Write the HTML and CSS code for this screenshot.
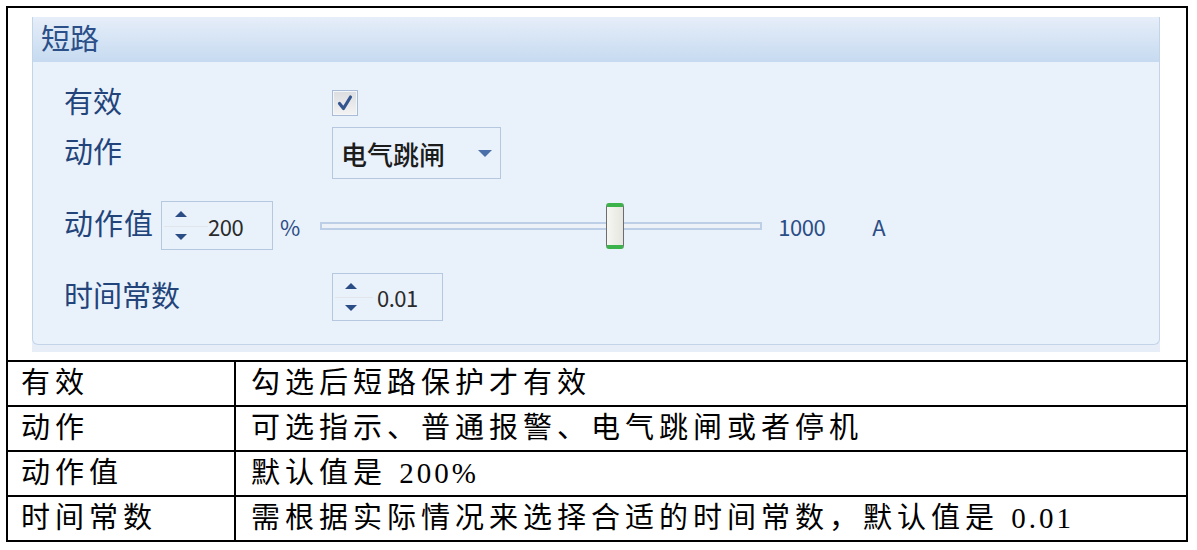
FILE: index.html
```html
<!DOCTYPE html>
<html>
<head>
<meta charset="utf-8">
<title>短路</title>
<link rel="stylesheet" href="styles.css">
</head>
<body>
<table class="spec">
  <colgroup><col class="c1"><col class="c2"></colgroup>
  <tr>
    <td colspan="2" class="shot-cell">
      <div class="shot">
        <div class="group">
          <div class="group-head">短路</div>
          <div class="group-body">
            <div class="row r1">
              <span class="lbl">有效</span>
              <span class="check">
                <svg width="18" height="18" viewBox="0 0 18 18"><path d="M3.5 9.5 L7.5 14.5 L14.5 3" fill="none" stroke="#33568f" stroke-width="3.2" stroke-linecap="round" stroke-linejoin="round"/></svg>
              </span>
            </div>
            <div class="row r2">
              <span class="lbl">动作</span>
              <span class="combo">电气跳闸<i class="caret"></i></span>
            </div>
            <div class="row r3">
              <span class="lbl lbl-auto">动作值</span>
              <span class="spin spin-a"><span class="spin-btns"><i class="up"></i><i class="down"></i></span><span class="num">200</span></span>
              <span class="unit">%</span>
              <span class="track"><span class="thumb"></span></span>
              <span class="max">1000</span>
              <span class="amp">A</span>
            </div>
            <div class="row r4">
              <span class="lbl">时间常数</span>
              <span class="spin spin-b"><span class="spin-btns"><i class="up"></i><i class="down"></i></span><span class="num">0.01</span></span>
            </div>
          </div>
        </div>
      </div>
    </td>
  </tr>
  <tr><td class="k">有效</td><td class="v">勾选后短路保护才有效</td></tr>
  <tr><td class="k">动作</td><td class="v">可选指示、普通报警、电气跳闸或者停机</td></tr>
  <tr><td class="k">动作值</td><td class="v">默认值是 <span class="lat">200%</span></td></tr>
  <tr><td class="k">时间常数</td><td class="v">需根据实际情况来选择合适的时间常数，默认值是 <span class="lat">0.01</span></td></tr>
</table>
</body>
</html>
```

FILE: styles.css
```css
body{margin:0; padding:6px; background:#fff;}

.spec{border-collapse:collapse; width:1182px; table-layout:fixed; font-family:"Liberation Serif","Noto Sans CJK SC",serif; font-size:29px; color:#000;}
.spec td{border:2px solid #000; padding:0;}
.c1{width:228px;}
.spec .k{height:43px; line-height:43px; padding-left:13px; letter-spacing:5px; white-space:nowrap;}
.spec .v{height:43px; line-height:43px; padding-left:15px; letter-spacing:5px; white-space:nowrap;}
.lat{letter-spacing:3px;}

/* screenshot panel */
.shot{margin:9px 26px 8px 24px; height:335px; background:#e7eef8; font-family:"Noto Sans CJK SC",sans-serif;}
.group{height:328px; box-sizing:border-box; border:1px solid #c3d4e9; border-top:none; border-radius:0 0 6px 6px; background:#e9f1fb;}
.group-head{height:45px; line-height:40px; padding-left:8px; font-size:29px; color:#2b4f88; background:linear-gradient(#e6eef9,#c6daf0);}
.group-body{padding:27px 0 0 31px;}

.row{display:flex; align-items:center;}
.r1{height:28px;}
.r2{height:52px; margin-top:10px;}
.r3{height:49px; margin-top:22px;}
.r4{height:48px; margin-top:23px;}

.lbl{width:268px; font-size:29px; color:#22447a; line-height:1; padding-bottom:6px;}
.lbl-auto{width:auto; margin-right:7px; letter-spacing:1px;}

.check{width:24px; height:24px; border:1px solid #a8bcd7; background:linear-gradient(#dcdde0,#f3f3f3); display:flex; align-items:center; justify-content:center; box-shadow:inset 0 0 0 1px #f5f6f8;}

.combo{position:relative; width:159px; height:50px; border:1px solid #b6c8df; display:flex; align-items:center; padding-left:8px; font-size:26px; font-weight:500; color:#1c1c1c;}
.caret{position:absolute; right:8px; top:22px; width:0; height:0; border-left:7px solid transparent; border-right:7px solid transparent; border-top:7px solid #4a6fa9;}

.spin{display:flex; align-items:center; border:1px solid #b6c8df; box-sizing:border-box;}
.spin-a{width:112px; height:49px;}
.spin-b{width:111px; height:48px;}
.spin-btns{position:relative; width:40px; height:100%;}
.spin-btns:after{content:""; position:absolute; left:2px; right:0; top:50%; border-top:1px solid #e2e6ea;}
.up,.down{position:absolute; left:12px; width:0; height:0; border-left:6px solid transparent; border-right:6px solid transparent;}
.up{top:9px; border-bottom:6px solid #2b4d85;}
.down{bottom:9px; border-top:6px solid #2b4d85;}
.spin-a .spin-btns{width:46px;}
.spin-a .up,.spin-a .down{left:13px;}
.num{font-size:22px; color:#2a2a2a; letter-spacing:-0.5px;}
.spin-b .num{margin-left:4px;}

.unit{margin-left:7px; font-size:22px; color:#2b4d85;}
.track{position:relative; margin-left:20px; width:442px; height:8px; box-sizing:border-box; border:2px solid #bccfe6; background:#edf2f9;}
.thumb{position:absolute; left:284px; top:-21px; width:18px; height:46px; box-sizing:border-box; border:1px solid #6d6d6d; border-top:4px solid #3cb34a; border-bottom:4px solid #3cb34a; border-radius:3px; background:linear-gradient(90deg,#f6f6f2,#e6e6e0);}
.max{margin-left:16px; font-size:22px; color:#2b4d85; letter-spacing:-0.5px;}
.amp{margin-left:47px; font-size:22px; color:#2b4d85;}
```
